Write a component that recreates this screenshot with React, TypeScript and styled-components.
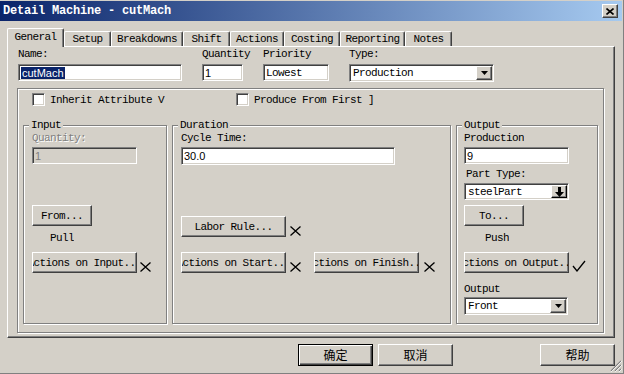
import React from "react";
import styled, { createGlobalStyle, css } from "styled-components";

const BG = "#D4D0C8";
const MONO = `"Liberation Mono", "DejaVu Sans Mono", monospace`;
const SANS = `"Liberation Sans", Arial, sans-serif`;
const CJK = `"Noto Sans CJK SC", "Liberation Sans", sans-serif`;

const GlobalStyle = createGlobalStyle`
  * { box-sizing: border-box; }
  html, body { margin: 0; padding: 0; background: ${BG}; }
  body { font-family: ${MONO}; font-size: 11px; letter-spacing: -0.6px; color: #000; }
`;

const raised = css`
  background: ${BG};
  border: 1px solid;
  border-color: #fff #404040 #404040 #fff;
  box-shadow: inset -1px -1px #808080;
`;

const sunken = css`
  border: 1px solid;
  border-color: #808080 #fff #fff #808080;
  box-shadow: inset 1px 1px #404040, inset -1px -1px ${BG};
  padding: 1px;
`;

const etched = css`
  border: 1px solid #808080;
  box-shadow: inset 1px 1px #fff, 1px 1px #fff;
`;

const Window = styled.div`
  position: relative;
  width: 624px;
  height: 374px;
  background: ${BG};
  border-right: 1px solid #808080;
  border-bottom: 1px solid #808080;
  display: flex;
  flex-direction: column;
  overflow: hidden;
`;

const TitleBar = styled.div`
  margin: 1px 1px 0 0;
  height: 20px;
  flex: none;
  background: linear-gradient(to right, #0a246a, #a6caf0);
  display: flex;
  align-items: center;
  justify-content: space-between;
  padding: 0 4px 0 3px;
`;

const Title = styled.span`
  color: #fff;
  font-weight: bold;
  font-size: 12px;
  letter-spacing: -0.2px;
  white-space: nowrap;
`;

const CloseButton = styled.div`
  ${raised}
  width: 16px;
  height: 14px;
  display: flex;
  align-items: center;
  justify-content: center;
`;

const TabStrip = styled.div`
  margin-top: 7px;
  height: 18px;
  flex: none;
  display: flex;
  align-items: flex-end;
  padding-left: 9px;
`;

const Tab = styled.div<{ $w: number; $active?: boolean }>`
  position: relative;
  flex: none;
  width: ${(p) => p.$w}px;
  height: ${(p) => (p.$active ? 19 : 15)}px;
  background: ${BG};
  border-top: 1px solid #fff;
  border-left: 1px solid #fff;
  border-right: 1px solid #404040;
  box-shadow: inset -1px 0 #808080;
  border-radius: 2px 2px 0 0;
  display: flex;
  align-items: center;
  justify-content: center;
  white-space: nowrap;
  padding-bottom: ${(p) => (p.$active ? 2 : 0)}px;
  ${(p) =>
    p.$active &&
    css`
      margin: 0 0 -1px -2px;
      z-index: 1;
    `}
`;

const TabPage = styled.div`
  margin-left: 7px;
  width: 608px;
  height: 292px;
  flex: none;
  border-top: 1px solid #fff;
  border-left: 1px solid #fff;
  border-right: 1px solid #404040;
  border-bottom: 1px solid #404040;
  box-shadow: inset -1px -1px #808080;
  display: flex;
  flex-direction: column;
`;

const TopRow = styled.div`
  display: flex;
  gap: 20px;
  padding: 1px 0 0 10px;
`;

const Field = styled.div<{ $w: number }>`
  width: ${(p) => p.$w}px;
  display: flex;
  flex-direction: column;
`;

const Caption = styled.div<{ $mt?: number; $pl?: number; $disabled?: boolean; $spill?: boolean }>`
  height: 12px;
  line-height: 12px;
  white-space: nowrap;
  overflow: ${(p) => (p.$spill ? "visible" : "hidden")};
  margin-top: ${(p) => p.$mt ?? 0}px;
  padding-left: ${(p) => p.$pl ?? 0}px;
  color: ${(p) => (p.$disabled ? "#808080" : "#000")};
  ${(p) => p.$disabled && "text-shadow: 1px 1px 0 #fff;"}
`;

const TextBox = styled.div<{ $w?: number; $h?: number; $mt?: number; $disabled?: boolean; $sans?: boolean }>`
  ${sunken}
  width: ${(p) => (p.$w ? `${p.$w}px` : "100%")};
  height: ${(p) => p.$h ?? 17}px;
  margin-top: ${(p) => p.$mt ?? 0}px;
  flex: none;
  background: ${(p) => (p.$disabled ? BG : "#fff")};
  color: ${(p) => (p.$disabled ? "#808080" : "#000")};
  display: flex;
  align-items: center;
  padding-left: 2px;
  white-space: nowrap;
  overflow: hidden;
  ${(p) =>
    p.$sans &&
    css`
      font-family: ${SANS};
      letter-spacing: 0;
    `}
`;

const Selected = styled.span`
  background: #0a246a;
  color: #fff;
  padding: 0 1px;
`;

const SelectBox = styled.div<{ $w?: number; $h?: number; $mt?: number }>`
  ${sunken}
  width: ${(p) => (p.$w ? `${p.$w}px` : "100%")};
  height: ${(p) => p.$h ?? 18}px;
  margin-top: ${(p) => p.$mt ?? 0}px;
  flex: none;
  background: #fff;
  display: flex;
  align-items: stretch;
`;

const SelectText = styled.span`
  flex: 1;
  display: flex;
  align-items: center;
  padding-left: 2px;
  white-space: nowrap;
  overflow: hidden;
`;

const DropButton = styled.span<{ $dark?: boolean }>`
  ${raised}
  width: 16px;
  flex: none;
  display: flex;
  align-items: center;
  justify-content: center;
  ${(p) =>
    p.$dark &&
    css`
      border-color: #fff #000 #000 #fff;
    `}
`;

const InnerFrame = styled.div`
  ${etched}
  margin: 6px 0 0 9px;
  width: 587px;
  height: 245px;
  flex: none;
  padding: 4px 0 0 5px;
  display: flex;
  flex-direction: column;
`;

const CheckRow = styled.div`
  display: flex;
  height: 13px;
  padding-left: 9px;
`;

const CheckItem = styled.label<{ $w?: number }>`
  display: flex;
  align-items: center;
  gap: 5px;
  ${(p) => (p.$w ? `width: ${p.$w}px;` : "")}
  flex: none;
  white-space: nowrap;
`;

const CheckBox = styled.span`
  ${sunken}
  width: 13px;
  height: 13px;
  background: #fff;
  flex: none;
`;

const GroupRow = styled.div`
  display: flex;
  gap: 5px;
  margin-top: 19px;
`;

const Group = styled.div<{ $w: number; $pl: number }>`
  ${etched}
  position: relative;
  flex: none;
  width: ${(p) => p.$w}px;
  height: 199px;
  padding: 6px 0 0 ${(p) => p.$pl}px;
  display: flex;
  flex-direction: column;
  align-items: flex-start;
`;

const Legend = styled.span`
  position: absolute;
  top: -7px;
  left: 5px;
  padding: 0 2px;
  line-height: 12px;
  background: ${BG};
  white-space: nowrap;
`;

const Button = styled.button<{ $w: number; $mt?: number; $ml?: number }>`
  ${raised}
  font: inherit;
  letter-spacing: inherit;
  color: #000;
  padding: 0;
  width: ${(p) => p.$w}px;
  height: 21px;
  margin-top: ${(p) => p.$mt ?? 0}px;
  margin-left: ${(p) => p.$ml ?? 0}px;
  flex: none;
  display: flex;
  align-items: center;
  justify-content: center;
  overflow: hidden;
  white-space: nowrap;
`;

const ActionRow = styled.div<{ $mt?: number }>`
  display: flex;
  align-items: flex-end;
  margin-top: ${(p) => p.$mt ?? 0}px;
`;

const Mark = styled.span<{ $ml?: number }>`
  display: flex;
  margin: 0 0 1px ${(p) => p.$ml ?? 3}px;
  flex: none;
`;

const Footer = styled.div`
  display: flex;
  justify-content: flex-end;
  gap: 5px;
  margin-top: 6px;
  padding-right: 8px;
`;

const DialogButton = styled.button<{ $default?: boolean; $ml?: number }>`
  font-family: ${CJK};
  font-size: 12px;
  letter-spacing: 0;
  color: #000;
  padding: 0 0 2px 0;
  width: 75px;
  height: 22px;
  flex: none;
  margin-left: ${(p) => p.$ml ?? 0}px;
  display: flex;
  align-items: center;
  justify-content: center;
  background: ${BG};
  ${(p) =>
    p.$default
      ? css`
          border: 1px solid #000;
          box-shadow: inset 1px 1px #fff, inset -1px -1px #404040, inset -2px -2px #808080;
        `
      : css`
          border: 1px solid;
          border-color: #fff #404040 #404040 #fff;
          box-shadow: inset -1px -1px #808080;
        `}
`;

const SizeGrip = styled.span`
  position: absolute;
  right: 1px;
  bottom: 1px;
  display: flex;
`;

const XMark = () => (
  <svg width="11" height="10" viewBox="0 0 11 10">
    <path d="M0.5 0.5 L10.5 9.5 M10.5 0.5 L0.5 9.5" stroke="#000" strokeWidth="1.3" fill="none" />
  </svg>
);

const CheckMark = () => (
  <svg width="14" height="12" viewBox="0 0 14 12">
    <path d="M1 6 L5 11 L13 1" stroke="#000" strokeWidth="1.3" fill="none" />
  </svg>
);

const DownTriangle = () => (
  <svg width="7" height="4" viewBox="0 0 7 4">
    <path d="M0 0 H7 L3.5 4 Z" fill="#000" />
  </svg>
);

const BoldArrow = () => (
  <svg width="9" height="10" viewBox="0 0 9 10">
    <path d="M3 0 H6 V5 H9 L4.5 10 L0 5 H3 Z" fill="#000" />
  </svg>
);

const CloseGlyph = () => (
  <svg width="8" height="7" viewBox="0 0 8 7">
    <path d="M0.5 0.5 L7.5 6.5 M7.5 0.5 L0.5 6.5" stroke="#000" strokeWidth="1.6" fill="none" />
  </svg>
);

const GripGlyph = () => (
  <svg width="12" height="12" viewBox="0 0 12 12">
    <path d="M11 1 L1 11 M11 5 L5 11 M11 9 L9 11" stroke="#808080" strokeWidth="1.2" />
    <path d="M12 1 L1 12 M12 5 L5 12 M12 9 L9 12" stroke="#fff" strokeWidth="0.8" />
  </svg>
);

const tabs: { label: string; w: number }[] = [
  { label: "General", w: 57 },
  { label: "Setup", w: 47 },
  { label: "Breakdowns", w: 72 },
  { label: "Shift", w: 47 },
  { label: "Actions", w: 54 },
  { label: "Costing", w: 56 },
  { label: "Reporting", w: 65 },
  { label: "Notes", w: 47 },
];

export default function App() {
  return (
    <>
      <GlobalStyle />
      <Window>
        <TitleBar>
          <Title>Detail Machine - cutMach</Title>
          <CloseButton>
            <CloseGlyph />
          </CloseButton>
        </TitleBar>

        <TabStrip>
          {tabs.map((t, i) => (
            <Tab key={t.label} $w={t.w} $active={i === 0}>
              {t.label}
            </Tab>
          ))}
        </TabStrip>

        <TabPage>
          <TopRow>
            <Field $w={164}>
              <Caption>Name:</Caption>
              <TextBox $mt={4} $sans>
                <Selected>cutMach</Selected>
              </TextBox>
            </Field>
            <Field $w={41}>
              <Caption $spill>Quantity</Caption>
              <TextBox $mt={4} $sans>1</TextBox>
            </Field>
            <Field $w={66}>
              <Caption>Priority</Caption>
              <TextBox $mt={4}>Lowest</TextBox>
            </Field>
            <Field $w={145}>
              <Caption>Type:</Caption>
              <SelectBox $mt={4}>
                <SelectText>Production</SelectText>
                <DropButton>
                  <DownTriangle />
                </DropButton>
              </SelectBox>
            </Field>
          </TopRow>

          <InnerFrame>
            <CheckRow>
              <CheckItem $w={204}>
                <CheckBox />
                Inherit Attribute V
              </CheckItem>
              <CheckItem>
                <CheckBox />
                Produce From First ]
              </CheckItem>
            </CheckRow>

            <GroupRow>
              <Group $w={144} $pl={8}>
                <Legend>Input</Legend>
                <Caption $disabled>Quantity:</Caption>
                <TextBox $w={105} $mt={3} $disabled $sans>
                  1
                </TextBox>
                <Button $w={60} $mt={41}>
                  From...
                </Button>
                <Caption $mt={6} $pl={18}>
                  Pull
                </Caption>
                <ActionRow $mt={8}>
                  <Button $w={105}>
                    <span>Actions on Input...</span>
                  </Button>
                  <Mark $ml={3}>
                    <XMark />
                  </Mark>
                </ActionRow>
              </Group>

              <Group $w={279} $pl={8}>
                <Legend>Duration</Legend>
                <Caption>Cycle Time:</Caption>
                <TextBox $w={214} $h={18} $mt={3} $sans>
                  30.0
                </TextBox>
                <ActionRow $mt={51}>
                  <Button $w={105}>Labor Rule...</Button>
                  <Mark $ml={4}>
                    <XMark />
                  </Mark>
                </ActionRow>
                <ActionRow $mt={15}>
                  <Button $w={105}>
                    <span>Actions on Start...</span>
                  </Button>
                  <Mark $ml={4}>
                    <XMark />
                  </Mark>
                  <Button $w={105} $ml={13}>
                    <span>Actions on Finish...</span>
                  </Button>
                  <Mark $ml={5}>
                    <XMark />
                  </Mark>
                </ActionRow>
              </Group>

              <Group $w={142} $pl={7}>
                <Legend>Output</Legend>
                <Caption>Production</Caption>
                <TextBox $w={105} $mt={3} $sans>
                  9
                </TextBox>
                <Caption $mt={4} $pl={2}>
                  Part Type:
                </Caption>
                <SelectBox $w={105} $h={17} $mt={3}>
                  <SelectText>steelPart</SelectText>
                  <DropButton $dark>
                    <BoldArrow />
                  </DropButton>
                </SelectBox>
                <Button $w={60} $mt={5}>
                  To...
                </Button>
                <Caption $mt={6} $pl={21}>
                  Push
                </Caption>
                <ActionRow $mt={8}>
                  <Button $w={105}>
                    <span>Actions on Output...</span>
                  </Button>
                  <Mark $ml={3}>
                    <CheckMark />
                  </Mark>
                </ActionRow>
                <Caption $mt={10}>Output</Caption>
                <SelectBox $w={104} $mt={2}>
                  <SelectText>Front</SelectText>
                  <DropButton>
                    <DownTriangle />
                  </DropButton>
                </SelectBox>
              </Group>
            </GroupRow>
          </InnerFrame>
        </TabPage>

        <Footer>
          <DialogButton $default>确定</DialogButton>
          <DialogButton>取消</DialogButton>
          <DialogButton $ml={82}>帮助</DialogButton>
        </Footer>

        <SizeGrip>
          <GripGlyph />
        </SizeGrip>
      </Window>
    </>
  );
}
